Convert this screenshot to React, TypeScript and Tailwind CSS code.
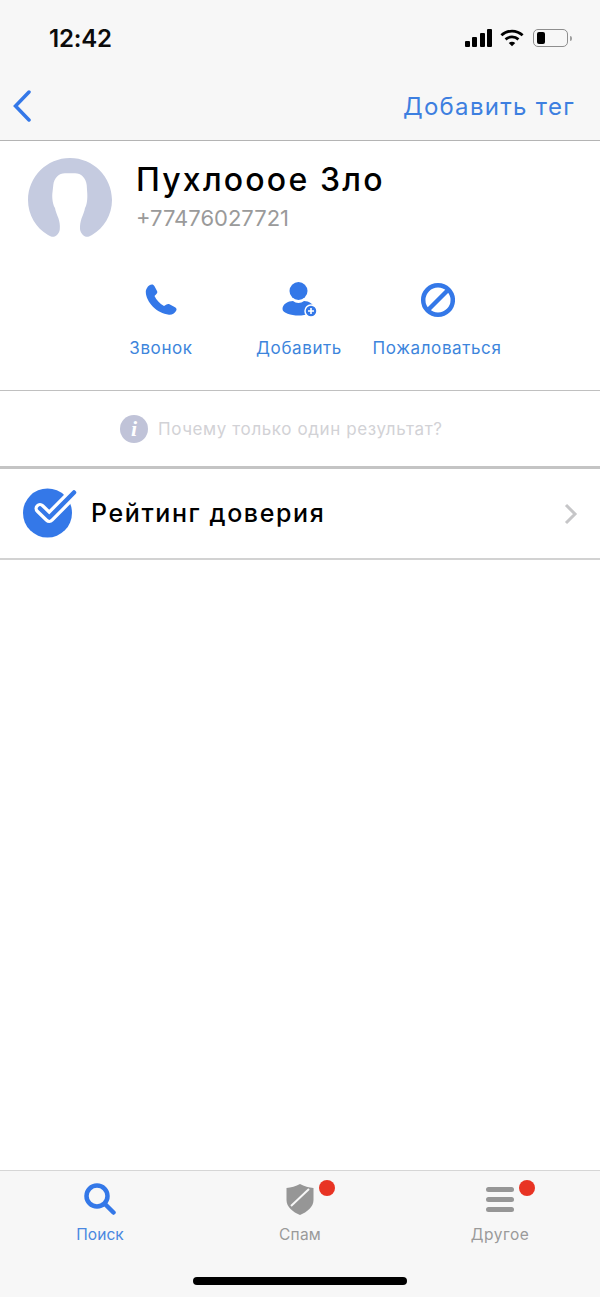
const FONT = "font-['Inter','Noto_Sans',sans-serif]";

const ACTIONS = [
  { label: "Звонок", icon: <PhoneIcon /> },
  { label: "Добавить", icon: <AddUserIcon /> },
  { label: "Пожаловаться", icon: <BlockIcon /> },
];

function PhoneIcon() {
  return (
    <svg width="36" height="36" viewBox="0 0 36 36">
      <path
        d="M4 6 C5 4 7 2.500 9 2.500 C10 2.500 10.800 3 11.500 4.300 L14 9 C14.600 10.200 14.400 11 13.400 12 L11.500 14 C13.500 18 16.500 21.500 21 24 L23.500 22.500 C24.700 21.700 25.500 21.800 26.500 22.300 L32 25.300 C33.700 26.300 34 27.500 33 29 C31.500 31.500 29 33 26 32.700 C14 31.500 3 20 2.800 10 C2.700 8.500 3.200 7.300 4 6 Z"
        fill="#3478e8"
      />
    </svg>
  );
}

function AddUserIcon() {
  return (
    <svg width="36" height="36" viewBox="0 0 36 36">
      <circle cx="17.500" cy="9" r="9" fill="#3478e8" />
      <path d="M1.500 27 C1.500 22 7 19 12 19 C15 21.500 20 21.500 23 19 C28 19 33 22 33 27 C33 31 25 33.500 17.500 33.500 C10 33.500 1.500 31 1.500 27 Z" fill="#3478e8" />
      <circle cx="30" cy="29" r="6" fill="#3478e8" stroke="#fff" strokeWidth="1.500" />
      <path d="M27 29 H33 M30 26 V32" stroke="#fff" strokeWidth="1.600" />
    </svg>
  );
}

function BlockIcon() {
  return (
    <svg width="36" height="36" viewBox="0 0 36 36" fill="none" stroke="#3478e8" strokeWidth="4.500">
      <circle cx="19" cy="18" r="14.800" />
      <path d="M8.500 28.500 L29.500 7.500" />
    </svg>
  );
}

function Avatar() {
  return (
    <svg width="84" height="84" viewBox="0 0 84 84" className="shrink-0">
      <path
        d="M42 0 C65.200 0 84 18.800 84 42 C84 57 76 70 64 77 L61 78.500 C57 80 52.500 76 52 71 C51.800 67 52.500 64 53.500 60.500 C55 57 56.500 53 57 50 C59 47 59.500 41 59.300 36 L58.700 27 C58 20 53 15.300 47 15.300 L37 15.300 C31 15.300 26 20 25.300 27 L24.300 36 C24 41 25 47 27 50 C27.500 53 29 57 30.500 60.500 C31.500 64 32.200 67 31.800 71 C31.500 76 27 80 23 78.500 L20 77 C8 70 0 57 0 42 C0 18.800 18.800 0 42 0 Z"
        fill="#c5cbe0"
      />
    </svg>
  );
}

function TrustIcon() {
  return (
    <svg width="54" height="50" viewBox="0 0 54 50" className="-mt-[2px] shrink-0">
      <circle cx="24.500" cy="25" r="24.500" fill="#3478e8" />
      <path d="M17 20.500 L26.300 29.500 L50 5.500" fill="none" stroke="#fff" strokeWidth="11" strokeLinecap="round" strokeLinejoin="round" />
      <path d="M17 20.500 L26.300 29.500 L51 4.500" fill="none" stroke="#3478e8" strokeWidth="4.500" strokeLinecap="round" strokeLinejoin="round" />
    </svg>
  );
}

export default function App() {
  return (
    <div className={`${FONT} flex h-[1297px] w-[600px] flex-col overflow-hidden bg-white`}>
      <header className="flex h-[141px] shrink-0 flex-col border-b border-[#b4b4b4] bg-[#f7f7f7]">
        <div className="flex h-[76px] items-center justify-between pl-[49px] pr-[28px]">
          <span className="pt-[2px] text-[24px] font-semibold tracking-[-0.2px] text-[#0b0b0b]">12:42</span>
          <div className="flex items-center gap-[8px]">
            <div className="flex h-[18px] items-end gap-[2.300px]">
              <span className="h-[6px] w-[5px] rounded-[1px] bg-black" />
              <span className="h-[10px] w-[5px] rounded-[1px] bg-black" />
              <span className="h-[14px] w-[5px] rounded-[1px] bg-black" />
              <span className="h-[18px] w-[5px] rounded-[1px] bg-black" />
            </div>
            <svg width="24" height="18" viewBox="0 0 26 19" fill="none" stroke="#000" strokeWidth="3">
              <path d="M1.500 6.500 C8 0.500 18 0.500 24.500 6.500" />
              <path d="M6 11 C10 7.500 16 7.500 20 11" />
              <path d="M13 18.500 L9.500 14.800 C11.500 13.300 14.500 13.300 16.500 14.800 Z" fill="#000" stroke="none" />
            </svg>
            <div className="ml-[1px] flex items-center gap-[2px]">
              <div className="flex h-[18px] w-[35px] items-center rounded-[5px] border border-[#8e8e8e] px-[3px]">
                <span className="h-[12px] w-[8px] rounded-[2px] bg-black" />
              </div>
              <span className="h-[5px] w-[2px] rounded-r bg-[#a0a0a0]" />
            </div>
          </div>
        </div>
        <div className="flex h-[60px] items-center justify-between pl-[13px] pr-[25px]">
          <svg width="18" height="32" viewBox="0 0 18 32" fill="none" stroke="#3478e8" strokeWidth="3.500" strokeLinecap="round">
            <path d="M16 2 L2.500 16 L16 30" />
          </svg>
          <span className="pt-[2px] text-[24px] tracking-[1.300px] text-[#3d7fe0]">Добавить тег</span>
        </div>
      </header>

      <section className="flex h-[250px] shrink-0 flex-col border-b border-[#c0c0c0]">
        <div className="flex gap-[24px] pl-[28px] pt-[17px]">
          <Avatar />
          <div className="flex flex-col">
            <span className="text-[32px] font-medium leading-[44px] tracking-[2.200px] text-black">Пухлооое Зло</span>
            <span className="text-[22px] leading-[32px] text-[#9a9a9a]">+77476027721</span>
          </div>
        </div>
        <div className="mt-[40px] grid grid-cols-[138px_138px_138px] pl-[92px]">
          {ACTIONS.map(a => (
            <div key={a.label} className="flex flex-col items-center gap-[18px]">
              <div className="flex h-[36px] items-center justify-center">{a.icon}</div>
              <span className="whitespace-nowrap text-[17px] leading-[24px] tracking-[0.6px] text-[#3d85dc]">{a.label}</span>
            </div>
          ))}
        </div>
      </section>

      <div className="flex h-[78px] shrink-0 items-center gap-[10px] border-b-[3px] border-[#c4c4c4] pl-[120px]">
        <span className="flex h-[28px] w-[28px] items-center justify-center rounded-full bg-[#c0c3d8] font-['Liberation_Serif',serif] text-[22px] font-bold italic text-white">
          i
        </span>
        <span className="pt-[2px] text-[17px] tracking-[0.6px] text-[#d2d2d6]">Почему только один результат?</span>
      </div>

      <div className="flex h-[91px] shrink-0 items-center border-b-2 border-[#d2d2d2] pl-[23px] pr-[22px]">
        <TrustIcon />
        <span className="ml-[14px] flex-1 text-[25px] font-medium tracking-[1.600px] text-black">Рейтинг доверия</span>
        <svg width="14" height="22" viewBox="0 0 14 22" fill="none" stroke="#c6c6c8" strokeWidth="3">
          <path d="M2 2 L11 11 L2 20" />
        </svg>
      </div>

      <div className="flex-1" />

      <nav className="flex h-[127px] shrink-0 flex-col border-t border-[#d6d6d6] bg-[#f7f7f7]">
        <div className="grid grid-cols-3 pt-[12px]">
          <div className="flex flex-col items-center gap-[8px]">
            <svg width="32" height="32" viewBox="0 0 32 32" fill="none" stroke="#3478e8" strokeWidth="4.500" strokeLinecap="round">
              <circle cx="13" cy="13" r="10.500" />
              <path d="M21 21 L29.500 29.500" />
            </svg>
            <span className="text-[15.500px] leading-[24px] tracking-[0.1px] text-[#4a87e0]">Поиск</span>
          </div>
          <div className="relative flex flex-col items-center gap-[8px]">
            <svg width="32" height="32" viewBox="0 0 32 32">
              <path d="M16 1 C20 3.500 25 4.500 29.500 5 V17 C29.500 24 23 29 16 32 C9 29 2.500 24 2.500 17 V5 C7 4.500 12 3.500 16 1 Z" fill="#969696" />
              <path d="M7 23 L25 6" stroke="#f7f7f7" strokeWidth="2" />
            </svg>
            <span className="absolute left-[119px] top-[-3px] h-[16px] w-[16px] rounded-full bg-[#e83323]" />
            <span className="text-[15.500px] leading-[24px] tracking-[0.2px] text-[#9a9a9a]">Спам</span>
          </div>
          <div className="relative flex flex-col items-center gap-[8px]">
            <div className="flex h-[32px] w-[28px] flex-col justify-center gap-[5px]">
              <span className="h-[5px] rounded-full bg-[#969696]" />
              <span className="h-[5px] rounded-full bg-[#969696]" />
              <span className="h-[5px] rounded-full bg-[#969696]" />
            </div>
            <span className="absolute left-[119px] top-[-3px] h-[16px] w-[16px] rounded-full bg-[#e83323]" />
            <span className="text-[15.500px] leading-[24px] tracking-[0.5px] text-[#9a9a9a]">Другое</span>
          </div>
        </div>
        <div className="mt-auto flex justify-center pb-[12px]">
          <span className="h-[8px] w-[214px] rounded-full bg-black" />
        </div>
      </nav>
    </div>
  );
}
